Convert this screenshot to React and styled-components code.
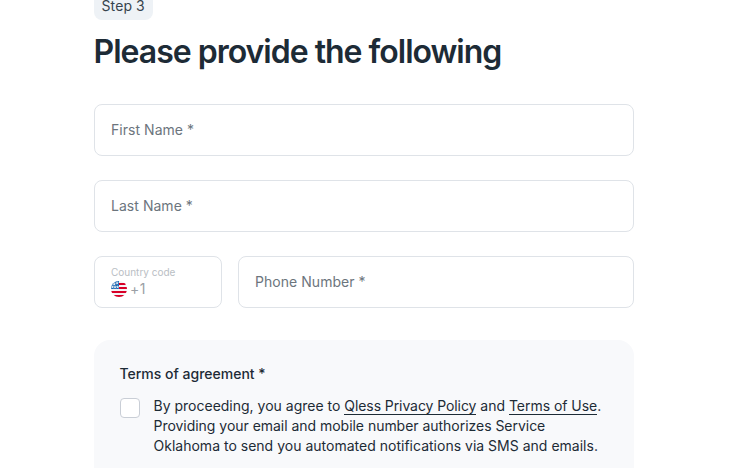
import React from 'react';
import styled, { createGlobalStyle } from 'styled-components';

const colors = {
    text: '#1d2b36',
    badgeText: '#36434d',
    badge: '#eef2f6',
    border: '#dfe3e8',
    checkboxBorder: '#c9ced6',
    label: '#6c757d',
    disabled: '#b9bec4',
    disabledValue: '#9b9fa5',
    panel: '#f8f9fb',
    white: '#fff'
};

const GlobalStyle = createGlobalStyle`
    * {
        box-sizing: border-box;
    }

    body {
        margin: 0;
        background: ${colors.white};
        color: ${colors.text};
        font-family: Inter, 'Liberation Sans', sans-serif;
    }
`;

const Page = styled.main`
    display: flex;
    flex-direction: column;
    align-items: flex-start;
    width: 540px;
    height: 468px;
    margin-left: 94px;
`;

const StepBadge = styled.span`
    flex: none;
    height: 20px;
    padding: 0 8px 0 7.5px;
    border-radius: 0 0 8px 8px;
    background: ${colors.badge};
    color: ${colors.badgeText};
    font-size: 14px;
    line-height: 12px;
    letter-spacing: 0.1px;
`;

const Title = styled.h1`
    margin: 12px 0 32px -0.5px;
    font-size: 32px;
    font-weight: 600;
    line-height: 40px;
    letter-spacing: -1px;
    white-space: nowrap;
`;

const Form = styled.form`
    display: flex;
    flex-direction: column;
    gap: 24px;
    width: 100%;
`;

const FieldRow = styled.div`
    display: grid;
    grid-template-columns: 128px 1fr;
    gap: 16px;
`;

const Field = styled.label`
    display: flex;
    flex-direction: column;
    justify-content: center;
    height: 52px;
    padding: 0 16px;
    border: 1px solid ${colors.border};
    border-radius: 8px;
    background: ${colors.white};
`;

const FieldLabel = styled.span`
    color: ${({ $small }) => ($small ? colors.disabled : colors.label)};
    font-size: ${({ $small }) => ($small ? '10px' : '14px')};
    line-height: ${({ $small }) => ($small ? '12px' : '20px')};
    letter-spacing: ${({ $small }) => ($small ? '0' : '0.04px')};
`;

const CodeValue = styled.span`
    display: flex;
    align-items: center;
    gap: 3px;
    height: 20px;
    color: ${colors.disabledValue};
    font-size: 14px;
    letter-spacing: 0.4px;

    svg {
        margin-top: 2px;
    }
`;

const Terms = styled.section`
    flex: 1;
    width: 100%;
    margin-top: 32px;
    padding: 24px 26px 0;
    border-radius: 16px 16px 0 0;
    background: ${colors.panel};
    font-size: 14px;
    line-height: 20px;
`;

const TermsTitle = styled.h2`
    margin: 0 0 12px -0.5px;
    font-size: 14px;
    font-weight: 500;
    line-height: 20px;
`;

const Agreement = styled.div`
    display: flex;
    align-items: flex-start;
    gap: 13.5px;
`;

const Checkbox = styled.span`
    flex: none;
    width: 20px;
    height: 20px;
    margin-top: 2px;
    border: 1px solid ${colors.checkboxBorder};
    border-radius: 4px;
    background: ${colors.white};
`;

const AgreementText = styled.p`
    margin: 0;
    white-space: nowrap;
`;

const Line = styled.span`
    display: block;
    letter-spacing: ${({ $spacing }) => $spacing || '0'};
`;

const Link = styled.a`
    border-bottom: 1px solid ${colors.text};
    color: inherit;
    letter-spacing: ${({ $spacing }) => $spacing || 'inherit'};
    text-decoration: none;
`;

const FlagIcon = () => (
    <svg width='16' height='16' viewBox='0 0 16 16' aria-hidden='true'>
        <clipPath id='flag'>
            <circle cx='8' cy='8' r='8' />
        </clipPath>
        <g clipPath='url(#flag)'>
            <path fill='#f4f4f6' d='M0 0h16v16H0z' />
            <path fill='#d80027' d='M8 2h8v2H8zM8 6h8v2H8zM0 10h16v2H0zM0 14h16v2H0z' />
            <path fill='#1767b5' d='M0 0h8v8H0z' />
            <path
                fill='#f0f0f0'
                d='M3.2 1.4l.5 1.2H5l-1 .8.4 1.2-1.2-.7-1.1.7.4-1.2-1-.8h1.3zM6.1.2l.5 1.2h1.3l-1 .8.4 1.2-1.2-.7-1.1.7.4-1.2-1-.8h1.3zM1.4 4.3l.5 1.2h1.3l-1 .8.4 1.2-1.2-.7-1.1.7.4-1.2-1-.8H.9zM4 4.3l.5 1.2h1.3l-1 .8.4 1.2L4 6.8l-1.1.7.4-1.2-1-.8h1.3zM6.6 4.3l.5 1.2h1.3l-1 .8.4 1.2-1.2-.7-1.1.7.4-1.2-1-.8h1.3z'
            />
        </g>
    </svg>
);

export default function App() {
    return (
        <>
            <GlobalStyle />
            <Page>
                <StepBadge>Step 3</StepBadge>
                <Title>Please provide the following</Title>
                <Form>
                    <Field>
                        <FieldLabel>First Name *</FieldLabel>
                    </Field>
                    <Field>
                        <FieldLabel>Last Name *</FieldLabel>
                    </Field>
                    <FieldRow>
                        <Field>
                            <FieldLabel $small>Country code</FieldLabel>
                            <CodeValue>
                                <FlagIcon />
                                +1
                            </CodeValue>
                        </Field>
                        <Field>
                            <FieldLabel>Phone Number *</FieldLabel>
                        </Field>
                    </FieldRow>
                </Form>
                <Terms>
                    <TermsTitle>Terms of agreement *</TermsTitle>
                    <Agreement>
                        <Checkbox role='checkbox' aria-checked='false' />
                        <AgreementText>
                            <Line>
                                By proceeding, you agree to <Link $spacing='-0.08px'>Qless Privacy Policy</Link> and{' '}
                                <Link $spacing='-0.04px'>Terms of Use</Link>.
                            </Line>
                            <Line $spacing='-0.03px'>
                                Providing your email and mobile number authorizes Service
                            </Line>
                            <Line $spacing='0.01px'>
                                Oklahoma to send you automated notifications via SMS and emails.
                            </Line>
                        </AgreementText>
                    </Agreement>
                </Terms>
            </Page>
        </>
    );
}
